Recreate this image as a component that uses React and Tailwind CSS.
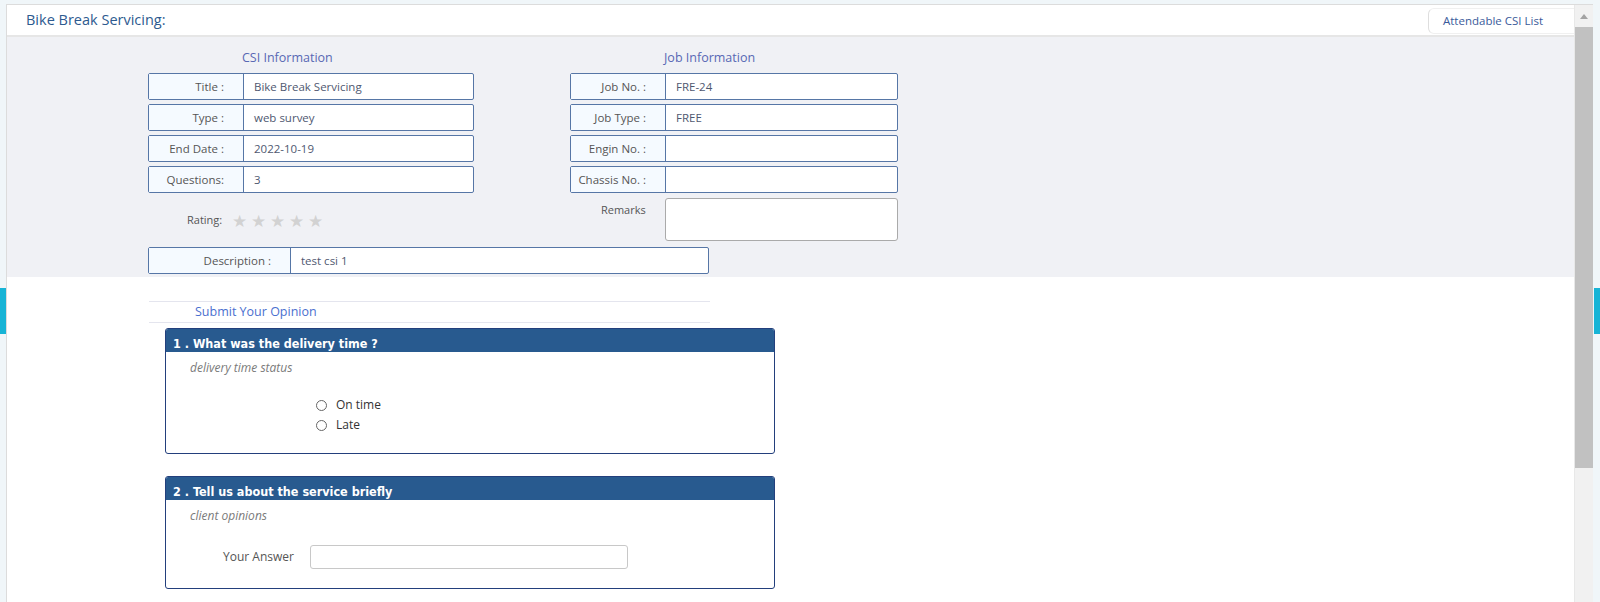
import React from "react";

const font = { fontFamily: '"Open Sans", "Noto Sans", sans-serif' };

const InfoRow = ({ label, value, labelWidth = "w-[95px]" }) => (
  <div className="flex h-[27px] border border-[#5676a6] rounded-[2px] bg-white text-[11.5px]">
    <div className={`${labelWidth} shrink-0 bg-[#f5faff] border-r border-[#5676a6] text-right pr-[19px] leading-[25px] text-[#555]`}>
      {label}
    </div>
    <div className="flex-1 pl-[10px] leading-[25px] text-[#4f5870]">{value}</div>
  </div>
);

const QuestionCard = ({ title, note, children, className = "" }) => (
  <div className={`w-[610px] border border-[#233f7c] rounded-[3px] overflow-hidden bg-white ${className}`}>
    <div
      className="h-[23px] bg-[#285a8f] text-white font-bold text-[12.5px] pl-[7px] pt-[7px] leading-[15px]"
      style={{ fontFamily: '"DejaVu Sans Condensed", "Liberation Sans", Arial, sans-serif' }}
    >
      {title}
    </div>
    <div className="pl-[24px] pt-[8px] leading-[16px] text-[12px] italic text-[#7a7a7a]">{note}</div>
    {children}
  </div>
);

const Radio = ({ label }) => (
  <label className="flex items-center h-[20px] text-[12px] text-[#333]">
    <span className="w-[11px] h-[11px] rounded-full border border-[#666] bg-white" />
    <span className="ml-[9px]">{label}</span>
  </label>
);

export default function App() {
  return (
    <div className="relative w-full h-[602px] overflow-hidden bg-[#f0f6f9]" style={font}>
      <div className="absolute left-0 top-[288px] w-[6px] h-[46px] bg-[#17b4d6]" />
      <div className="absolute left-[1594px] top-[288px] w-[6px] h-[46px] bg-[#17b4d6]" />

      <div className="ml-[6px] mt-[4px] w-[1587px] h-[598px] flex bg-white border-t border-l border-[#dcdcdc]">
        <div className="flex-1 flex flex-col">
          {/* header */}
          <div className="h-[32px] shrink-0 flex items-center justify-between border-b-2 border-[#e6e6e6]">
            <div className="pl-[19px] text-[14.5px] text-[#2d5a8f]">Bike Break Servicing:</div>
            <button className="h-[26px] mt-[2px] pl-[14px] pr-[31px] border border-r-0 border-t-[#f0f0f0] border-b-[#f0f0f0] border-l-[#dedede] rounded-l-[6px] text-[11.5px] text-[#3a5a9a]">
              Attendable CSI List
            </button>
          </div>

          {/* info section */}
          <div className="bg-[#f0f1f5] pt-[12px] pb-[3px] pl-[141px]">
            <div className="flex gap-[96px]">
              <div className="w-[326px]">
                <div className="h-[18px] leading-[18px] text-[12.5px] text-[#5868b4] pl-[94px]">CSI Information</div>
                <div className="mt-[6px] flex flex-col gap-[4px]">
                  <InfoRow label="Title :" value="Bike Break Servicing" />
                  <InfoRow label="Type :" value="web survey" />
                  <InfoRow label="End Date :" value="2022-10-19" />
                  <InfoRow label="Questions:" value="3" />
                </div>
                <div className="mt-[5px] h-[44px] flex items-center pl-[39px]">
                  <span className="text-[11px] text-[#555]">Rating:</span>
                  <div className="ml-[10px] flex gap-[4px] text-[17px] leading-none text-[#d2d2d2]">
                    <span>★</span>
                    <span>★</span>
                    <span>★</span>
                    <span>★</span>
                    <span>★</span>
                  </div>
                </div>
              </div>
              <div className="w-[328px]">
                <div className="h-[18px] leading-[18px] text-[12.5px] text-[#5868b4] pl-[94px]">Job Information</div>
                <div className="mt-[6px] flex flex-col gap-[4px]">
                  <InfoRow label="Job No. :" value="FRE-24" />
                  <InfoRow label="Job Type :" value="FREE" />
                  <InfoRow label="Engin No. :" value="" />
                  <InfoRow label="Chassis No. :" value="" />
                </div>
                <div className="mt-[5px] flex">
                  <div className="w-[95px] pr-[19px] pt-[4px] text-right text-[11px] text-[#555]">Remarks</div>
                  <textarea className="w-[234px] h-[43px] border border-[#aaa] rounded-[3px] bg-white resize-none outline-none" />
                </div>
              </div>
            </div>
            <div className="mt-[5px] w-[561px]">
              <InfoRow label="Description :" value="test csi 1" labelWidth="w-[142px]" />
            </div>
          </div>

          {/* opinion section */}
          <div className="pl-[142px] pt-[24px]">
            <div className="w-[561px] h-[22px] border-y border-[#e4e5ee] pl-[46px] leading-[20px] text-[12.5px] text-[#4b6fcf]">
              Submit Your Opinion
            </div>
            <div className="pl-[16px]">
              <QuestionCard title="1 . What was the delivery time ?" note="delivery time status" className="mt-[5px] h-[126px]">
                <div className="pl-[150px] pt-[19px] flex flex-col">
                  <Radio label="On time" />
                  <Radio label="Late" />
                </div>
              </QuestionCard>
              <QuestionCard title="2 . Tell us about the service briefly" note="client opinions" className="mt-[22px] h-[113px]">
                <div className="pl-[57px] pt-[21px] flex items-center">
                  <span className="text-[12px] text-[#555]">Your Answer</span>
                  <input className="ml-[16px] w-[318px] h-[24px] border border-[#c8c8c8] rounded-[3px] outline-none" />
                </div>
              </QuestionCard>
            </div>
          </div>
        </div>

        {/* scrollbar */}
        <div className="w-[19px] shrink-0 bg-[#f1f1f1] border-l border-[#e8e8e8] flex flex-col">
          <div className="h-[22px] flex items-center justify-center">
            <svg width="8" height="5" viewBox="0 0 8 5">
              <path d="M0 5 L4 0 L8 5 Z" fill="#a3a3a3" />
            </svg>
          </div>
          <div className="h-[441px] bg-[#c1c1c1]" />
        </div>
      </div>
    </div>
  );
}
